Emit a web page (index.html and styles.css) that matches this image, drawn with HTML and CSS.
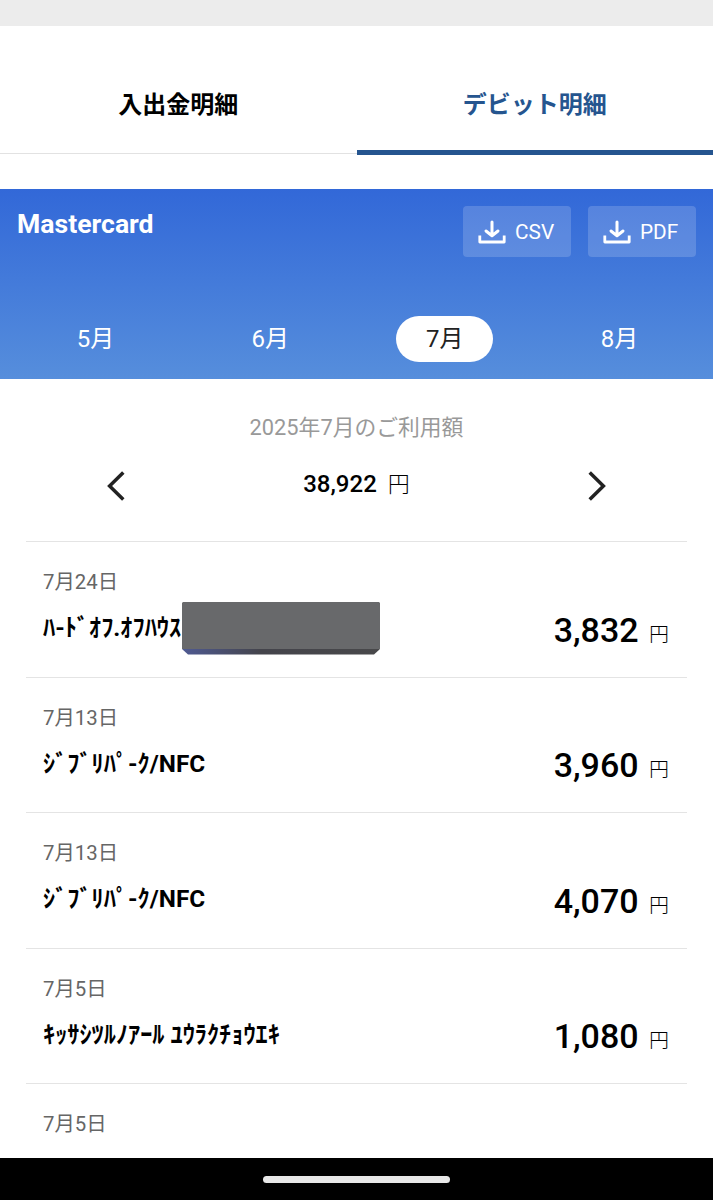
FILE: index.html
```html
<!DOCTYPE html>
<html lang="ja">
<head>
<meta charset="utf-8">
<title>デビット明細</title>
<link rel="stylesheet" href="styles.css">
</head>
<body>
<div class="screen">
  <div class="status"></div>
  <nav class="tabs">
    <div class="tab">入出金明細</div>
    <div class="tab tab-active">デビット明細</div>
  </nav>
  <header class="card">
    <div class="card-top">
      <h1 class="brand">Mastercard</h1>
      <div class="exports">
        <button class="export"><svg class="dl" viewBox="0 0 28 24"><path d="M1.8 15.500V22H26.200V15.500"/><path class="dl-arrow" d="M14 2V15M8 11L14 15.700L20 11"/></svg><span>CSV</span></button>
        <button class="export"><svg class="dl" viewBox="0 0 28 24"><path d="M1.8 15.500V22H26.200V15.500"/><path class="dl-arrow" d="M14 2V15M8 11L14 15.700L20 11"/></svg><span>PDF</span></button>
      </div>
    </div>
    <div class="months">
      <span class="month">5月</span>
      <span class="month">6月</span>
      <span class="month month-active">7月</span>
      <span class="month">8月</span>
    </div>
  </header>
  <section class="summary">
    <p class="caption">2025年7月のご利用額</p>
    <div class="pager">
      <svg class="chevron" viewBox="0 0 18 30"><path d="M16.3 1.5L2.6 15L16.3 28.5"/></svg>
      <p class="total">38,922 <span class="total-unit">円</span></p>
      <svg class="chevron" viewBox="0 0 18 30"><path d="M1.7 1.5L15.4 15L1.7 28.5"/></svg>
    </div>
  </section>
  <main class="list">
    <article class="row">
      <p class="date">7月24日</p>
      <div class="line"><p class="name">ﾊ-ﾄﾞｵﾌ.ｵﾌﾊｳｽ</p><svg class="mask" viewBox="0 0 198 53"><defs><linearGradient id="edge"><stop offset="0" stop-color="#4f5a92"/><stop offset=".4" stop-color="#44444b"/><stop offset="1" stop-color="#48484a"/></linearGradient></defs><path fill="url(#edge)" d="M0 44H198V47L192 52.500H6L0 47Z"/><path fill="#68696b" d="M1 0H197L198 1V47H0V1Z"/></svg><p class="amount">3,832 <span class="unit">円</span></p></div>
    </article>
    <article class="row">
      <p class="date">7月13日</p>
      <div class="line"><p class="name">ｼﾞﾌﾞﾘﾊﾟ-ｸ/NFC</p><p class="amount">3,960 <span class="unit">円</span></p></div>
    </article>
    <article class="row">
      <p class="date">7月13日</p>
      <div class="line"><p class="name">ｼﾞﾌﾞﾘﾊﾟ-ｸ/NFC</p><p class="amount">4,070 <span class="unit">円</span></p></div>
    </article>
    <article class="row">
      <p class="date">7月5日</p>
      <div class="line"><p class="name">ｷｯｻｼﾂﾙﾉｱｰﾙ ﾕｳﾗｸﾁｮｳｴｷ</p><p class="amount">1,080 <span class="unit">円</span></p></div>
    </article>
    <article class="row">
      <p class="date">7月5日</p>
    </article>
  </main>
  <footer class="navbar"><div class="handle"></div></footer>
</div>
</body>
</html>
```
FILE: styles.css
```css
* { box-sizing: border-box; margin: 0; padding: 0; }
body { background: #fff; color: #000; font-family: Roboto, "Noto Sans CJK JP", sans-serif; }
.screen { width: 713px; height: 1200px; display: flex; flex-direction: column; overflow: hidden; }
.status { height: 26px; flex: none; background: #ececec; }
.tabs { display: flex; height: 129px; flex: none; }
.tab { flex: 1; height: 128px; padding-top: 61px; border-bottom: 1px solid #e2e2e2; font-size: 24px; line-height: 36px; font-weight: 700; text-align: center; }
.tab-active { height: 129px; color: #25558f; border-bottom: 5px solid #25558f; }
.card { height: 190px; margin-top: 34px; flex: none; background: linear-gradient(#3268d8, #568edc); color: #fff; }
.card-top { display: flex; justify-content: space-between; height: 127px; padding: 17px 17px 0 17px; }
.brand { font-size: 26.6px; line-height: 36px; font-weight: 700; }
.exports { display: flex; gap: 17px; }
.export { width: 108px; height: 51px; display: flex; align-items: center; gap: 9px; padding-left: 15px; border: 0; border-radius: 4px; background: rgba(255,255,255,.17); color: #fff; font: 400 20.8px Roboto, sans-serif; }
.dl { width: 28px; height: 24px; fill: none; stroke: #fff; stroke-width: 2.8; stroke-linejoin: round; }
.dl-arrow { stroke-width: 3; stroke-linecap: round; }
.months { display: flex; justify-content: space-between; padding: 0 45px 0 47px; }
.month { width: 97px; height: 46px; border-radius: 23px; font-size: 24px; line-height: 46px; text-align: center; }
.month-active { background: #fff; color: #222; }
.summary { height: 162px; flex: none; padding-top: 33px; text-align: center; }
.caption { font-size: 21.8px; line-height: 32px; color: #999; }
.pager { display: flex; justify-content: space-between; align-items: center; height: 40px; margin-top: 22px; padding: 0 107px; }
.chevron { width: 18px; height: 30px; fill: none; stroke: #222; stroke-width: 3.5; }
.total { font-size: 24px; line-height: 36px; font-weight: 500; padding-bottom: 3px; }
.total-unit { font-size: 22px; font-weight: 300; margin-left: 5px; }
.list { flex: 1; min-height: 0; overflow: hidden; margin: 0 26px; }
.row { height: 135.5px; border-top: 1.5px solid #e4e4e4; padding: 24px 18px 0 17px; }
.date { font-size: 20.4px; line-height: 32px; color: #666; }
.line { display: flex; align-items: center; height: 56px; margin-top: 2px; }
.name { font-size: 24.3px; line-height: 36px; font-weight: 700; white-space: pre; }
.mask { width: 198px; height: 53px; margin-left: 1px; flex: none; }
.amount { margin-left: auto; padding-top: 8px; font-size: 34px; line-height: 44px; font-weight: 500; white-space: nowrap; }
.unit { font-size: 20px; font-weight: 300; margin-left: 2px; }
.navbar { height: 42px; flex: none; background: #000; display: flex; justify-content: center; align-items: center; }
.handle { width: 187px; height: 7px; border-radius: 4px; background: #e8e8e8; }
```
